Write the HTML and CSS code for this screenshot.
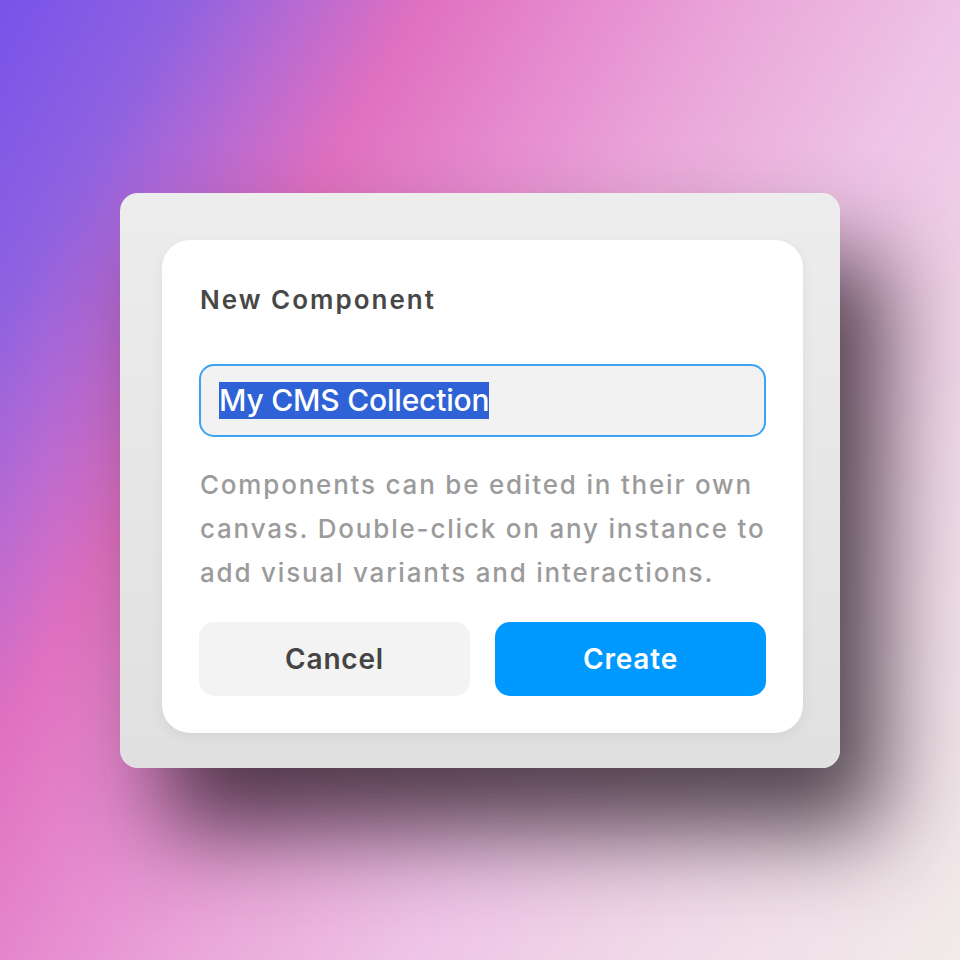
FILE: index.html
```html
<!DOCTYPE html>
<html>
<head>
<meta charset="utf-8">
<link rel="stylesheet" href="styles.css">
</head>
<body>
<div class="stage">
  <div class="frame">
    <div class="dialog">
      <div class="title">New Component</div>
      <div class="field"><span class="sel">My CMS Collection</span></div>
      <p class="desc">Components can be edited in their own canvas. Double-click on any instance to add visual variants and interactions.</p>
      <div class="actions">
        <div class="btn cancel">Cancel</div>
        <div class="btn create">Create</div>
      </div>
    </div>
  </div>
</div>
</body>
</html>
```
FILE: styles.css
```css
html, body { margin: 0; padding: 0; }
body {
  width: 960px;
  height: 960px;
  overflow: hidden;
  font-family: Inter, "Noto Sans", sans-serif;
}
.stage {
  width: 960px;
  height: 960px;
  display: flex;
  align-items: center;
  justify-content: center;
  background: linear-gradient(120deg, #7853ea 0%, #8f62e0 12%, #b86ad2 20%, #e070c0 28%, #e68ccf 39%, #eaa8da 50%, #eec4e6 64%, #f0dae8 80%, #f2ebea 100%);
}
.frame {
  box-sizing: border-box;
  width: 720px;
  height: 575px;
  margin-top: 1px;
  padding: 47px 37px 35px 42px;
  border-radius: 18px;
  background: linear-gradient(180deg, #ededed 0%, #e0e0e0 100%);
  box-shadow: 42px 62px 90px rgba(40, 28, 38, 0.8);
}
.dialog {
  box-sizing: border-box;
  height: 493px;
  padding: 45px 37px 37px 37px;
  border-radius: 28px;
  background: #fff;
  box-shadow: 0 4px 14px rgba(0,0,0,0.06);
  display: flex;
  flex-direction: column;
}
.title {
  font-size: 26px;
  line-height: 30px;
  font-weight: 600;
  color: #474747;
  letter-spacing: 2px;
  padding-left: 1px;
}
.field {
  box-sizing: border-box;
  margin-top: 49px;
  height: 73px;
  border: 2px solid #3ba4f2;
  border-radius: 15px;
  background: #f2f2f2;
  display: flex;
  align-items: center;
  padding-left: 18px;
}
.sel {
  background: #2e62d6;
  color: #fff;
  font-size: 30px;
  font-weight: 500;
  line-height: 37px;
  letter-spacing: -0.2px;
}
.desc {
  margin: 26px 0 0 0;
  font-size: 26px;
  line-height: 44px;
  font-weight: 500;
  color: #9b9b9b;
  letter-spacing: 1.8px;
  padding-left: 1px;
}
.actions {
  margin-top: auto;
  display: flex;
  gap: 25px;
}
.btn {
  flex: 1;
  height: 74px;
  border-radius: 15px;
  display: flex;
  align-items: center;
  justify-content: center;
  font-size: 28px;
  font-weight: 600;
  letter-spacing: 0.8px;
}
.cancel { background: #f3f3f3; color: #444; }
.create { background: #0099ff; color: #fff; }
```
